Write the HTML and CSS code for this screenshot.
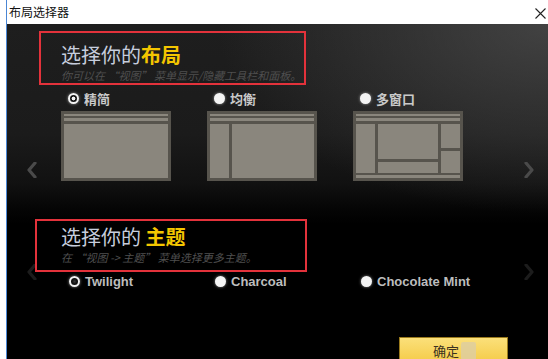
FILE: index.html
```html
<!DOCTYPE html>
<html lang="zh-CN">
<head>
  <meta charset="UTF-8" />
  <meta name="viewport" content="width=device-width, initial-scale=1.0">
  <title>布局选择器</title>
  <link rel="stylesheet" href="styles.css">
</head>
<body>
  <div class="window">
    <header class="titlebar">
      <span class="title">布局选择器</span>
      <svg class="close" width="11" height="11" viewBox="0 0 11 11">
        <path d="M0.5 0.5 L10.5 10.5 M10.5 0.5 L0.5 10.5" stroke="#222" stroke-width="1.1" fill="none"/>
      </svg>
    </header>

    <main class="content">
      <!-- layout picker -->
      <section class="picker picker-layout">
        <div class="nav nav-left">
          <svg width="12" height="16" viewBox="0 0 12 16"><path d="M9 1 L3 8 L9 15" stroke="#4a4a4a" stroke-width="3.2" fill="none" stroke-linecap="round" stroke-linejoin="round"/></svg>
        </div>
        <div class="picker-body">
          <div class="callout callout-layout">
            <h2>选择你的<b>布局</b></h2>
            <p>你可以在 “视图” 菜单显示/隐藏工具栏和面板。</p>
          </div>
          <div class="options">
            <div class="option">
              <div class="option-label"><span class="radio checked"></span>精简</div>
              <div class="thumb">
                <div class="bar bar-top"></div>
                <div class="bar bar-second"></div>
                <div class="main-area">
                  <div class="pane grow"></div>
                </div>
              </div>
            </div>
            <div class="option">
              <div class="option-label"><span class="radio"></span>均衡</div>
              <div class="thumb">
                <div class="bar bar-top"></div>
                <div class="bar bar-second"></div>
                <div class="main-area">
                  <div class="pane side"></div>
                  <div class="pane grow"></div>
                </div>
              </div>
            </div>
            <div class="option">
              <div class="option-label"><span class="radio"></span>多窗口</div>
              <div class="thumb">
                <div class="bar bar-top"></div>
                <div class="bar bar-second"></div>
                <div class="main-area">
                  <div class="pane side"></div>
                  <div class="stack grow">
                    <div class="pane grow"></div>
                    <div class="pane mid-bottom"></div>
                  </div>
                  <div class="stack side">
                    <div class="pane right-top"></div>
                    <div class="pane grow"></div>
                  </div>
                </div>
                <div class="bar bar-status"></div>
              </div>
            </div>
          </div>
        </div>
        <div class="nav nav-right">
          <svg width="12" height="16" viewBox="0 0 12 16"><path d="M3 1 L9 8 L3 15" stroke="#4a4a4a" stroke-width="3.2" fill="none" stroke-linecap="round" stroke-linejoin="round"/></svg>
        </div>
      </section>

      <!-- theme picker -->
      <section class="picker picker-theme">
        <div class="nav nav-left">
          <svg width="12" height="16" viewBox="0 0 12 16"><path d="M9 1 L3 8 L9 15" stroke="#1c1c1c" stroke-width="3.2" fill="none" stroke-linecap="round" stroke-linejoin="round"/></svg>
        </div>
        <div class="picker-body">
          <div class="callout callout-theme">
            <h2>选择你的 <b>主题</b></h2>
            <p>在 “视图 -&gt; 主题” 菜单选择更多主题。</p>
          </div>
          <div class="options">
            <div class="option-label theme"><span class="radio checked ring"></span>Twilight</div>
            <div class="option-label theme"><span class="radio"></span>Charcoal</div>
            <div class="option-label theme"><span class="radio"></span>Chocolate Mint</div>
          </div>
        </div>
        <div class="nav nav-right">
          <svg width="12" height="16" viewBox="0 0 12 16"><path d="M3 1 L9 8 L3 15" stroke="#1c1c1c" stroke-width="3.2" fill="none" stroke-linecap="round" stroke-linejoin="round"/></svg>
        </div>
      </section>

      <footer class="actions">
        <button class="ok-button">确定<span class="smudge"></span></button>
      </footer>
    </main>
  </div>
</body>
</html>
```

FILE: styles.css
```css
html, body {
  margin: 0;
  padding: 0;
  height: 100%;
  overflow: hidden;
}

body {
  background-color: white;
  font-family: "Liberation Sans", Arial, "Noto Sans CJK SC", sans-serif;
}

.window {
  margin-left: 6px;
  height: 100%;
  border-left: 1px solid #4a86d4;
  display: flex;
  flex-direction: column;
}

.titlebar {
  height: 24px;
  flex: none;
  display: flex;
  align-items: center;
  justify-content: space-between;
  padding: 0 2px 0 2px;
  background-color: white;
}

.title {
  font-family: "Noto Sans CJK SC", sans-serif;
  font-size: 12px;
  color: #111;
  line-height: 24px;
}

.close {
  margin-top: 2px;
}

.content {
  flex: 1;
  padding-top: 7px;
  background:
    radial-gradient(ellipse 330px 190px at 100% 0%, rgba(78, 78, 78, 0.75), rgba(78, 78, 78, 0) 100%),
    linear-gradient(#1e1e1e 0, #1b1b1b 110px, #111 160px, #050505 185px, #000 200px);
}

.picker {
  display: flex;
}

.picker-theme {
  margin-top: 38px;
}

.nav {
  width: 32px;
  flex: none;
  display: flex;
  align-items: flex-end;
}

.nav-left {
  justify-content: flex-end;
  padding-right: 1px;
  box-sizing: border-box;
}

.nav-right {
  padding-left: 7px;
  box-sizing: border-box;
}

.picker-layout .nav {
  padding-bottom: 3px;
}

.picker-theme .nav {
  padding-bottom: 9px;
}

.picker-body {
  flex: 1;
}

.callout {
  border: 2px solid #e3323b;
  box-sizing: border-box;
}

.callout h2 {
  margin: 0;
  font-family: "Noto Sans CJK SC", sans-serif;
  font-size: 20px;
  font-weight: normal;
  line-height: 24px;
  color: #c6cddd;
  white-space: nowrap;
}

.callout h2 b {
  color: #f4c600;
  font-weight: bold;
}

.callout p {
  margin: 2px 0 0 0;
  font-family: "Noto Sans CJK SC", sans-serif;
  font-size: 11px;
  line-height: 13px;
  font-style: italic;
  color: #4f4f4f;
  white-space: nowrap;
}

.callout-layout {
  width: 267px;
  height: 54px;
  padding: 10px 0 0 20px;
}

.callout-theme {
  width: 272px;
  height: 53px;
  margin-left: -4px;
  padding: 4px 0 0 24px;
}

.options {
  display: grid;
  grid-template-columns: 110px 110px 110px;
  column-gap: 36px;
  padding-left: 22px;
}

.picker-layout .options {
  margin-top: 5px;
}

.picker-theme .options {
  margin-top: 1px;
}

.option-label {
  display: flex;
  align-items: center;
  height: 16px;
  padding-left: 7px;
  font-family: "Noto Sans CJK SC", sans-serif;
  font-size: 13px;
  font-weight: bold;
  color: #c9c9c9;
  white-space: nowrap;
}

.option-label.theme {
  font-family: "Liberation Sans", Arial, sans-serif;
  color: #bdbdbd;
  padding-left: 8px;
}

.radio {
  width: 11px;
  height: 11px;
  border-radius: 50%;
  background-color: #f4f4f4;
  box-shadow: 0 0 3px rgba(255, 255, 255, 0.55);
  margin-right: 5px;
  flex: none;
  box-sizing: border-box;
}

.radio.checked {
  border: 2px solid #f4f4f4;
  background: radial-gradient(circle, #f4f4f4 0, #f4f4f4 1.6px, #151515 2.2px);
}

.radio.ring {
  border-width: 2.5px;
  background: radial-gradient(circle, #3a3a3a 0, #111 2.5px);
}

.thumb {
  margin-top: 5px;
  width: 110px;
  height: 70px;
  padding: 3px;
  box-sizing: border-box;
  background-color: #57544d;
  display: flex;
  flex-direction: column;
}

.bar {
  background-color: #8a867d;
  flex: none;
}

.bar-top {
  height: 2px;
  margin-bottom: 2px;
}

.bar-second {
  height: 3px;
  margin-bottom: 3px;
}

.bar-status {
  height: 3px;
  margin-top: 2px;
}

.main-area {
  flex: 1;
  display: flex;
  gap: 3px;
}

.pane {
  background-color: #8a867d;
}

.stack {
  display: flex;
  flex-direction: column;
  gap: 3px;
}

.grow {
  flex: 1;
}

.side {
  width: 19px;
  flex: none;
}

.mid-bottom {
  height: 11px;
}

.right-top {
  height: 24px;
}

.actions {
  display: flex;
  justify-content: flex-end;
  padding-right: 40px;
  margin-top: 48px;
}

.ok-button {
  width: 109px;
  height: 32px;
  border: 1px solid #9a7a1c;
  background: linear-gradient(#fbe07a, #f3c63c);
  font-family: "Noto Sans CJK SC", sans-serif;
  font-size: 13px;
  line-height: 16px;
  color: #3b3120;
  padding: 5px 0 0 33px;
  text-align: left;
  display: flex;
  align-items: flex-start;
}

.smudge {
  display: inline-block;
  width: 15px;
  height: 18px;
  margin-left: 2px;
  margin-top: -1px;
  background-color: rgba(222, 206, 160, 0.85);
  border-radius: 2px;
}
```
